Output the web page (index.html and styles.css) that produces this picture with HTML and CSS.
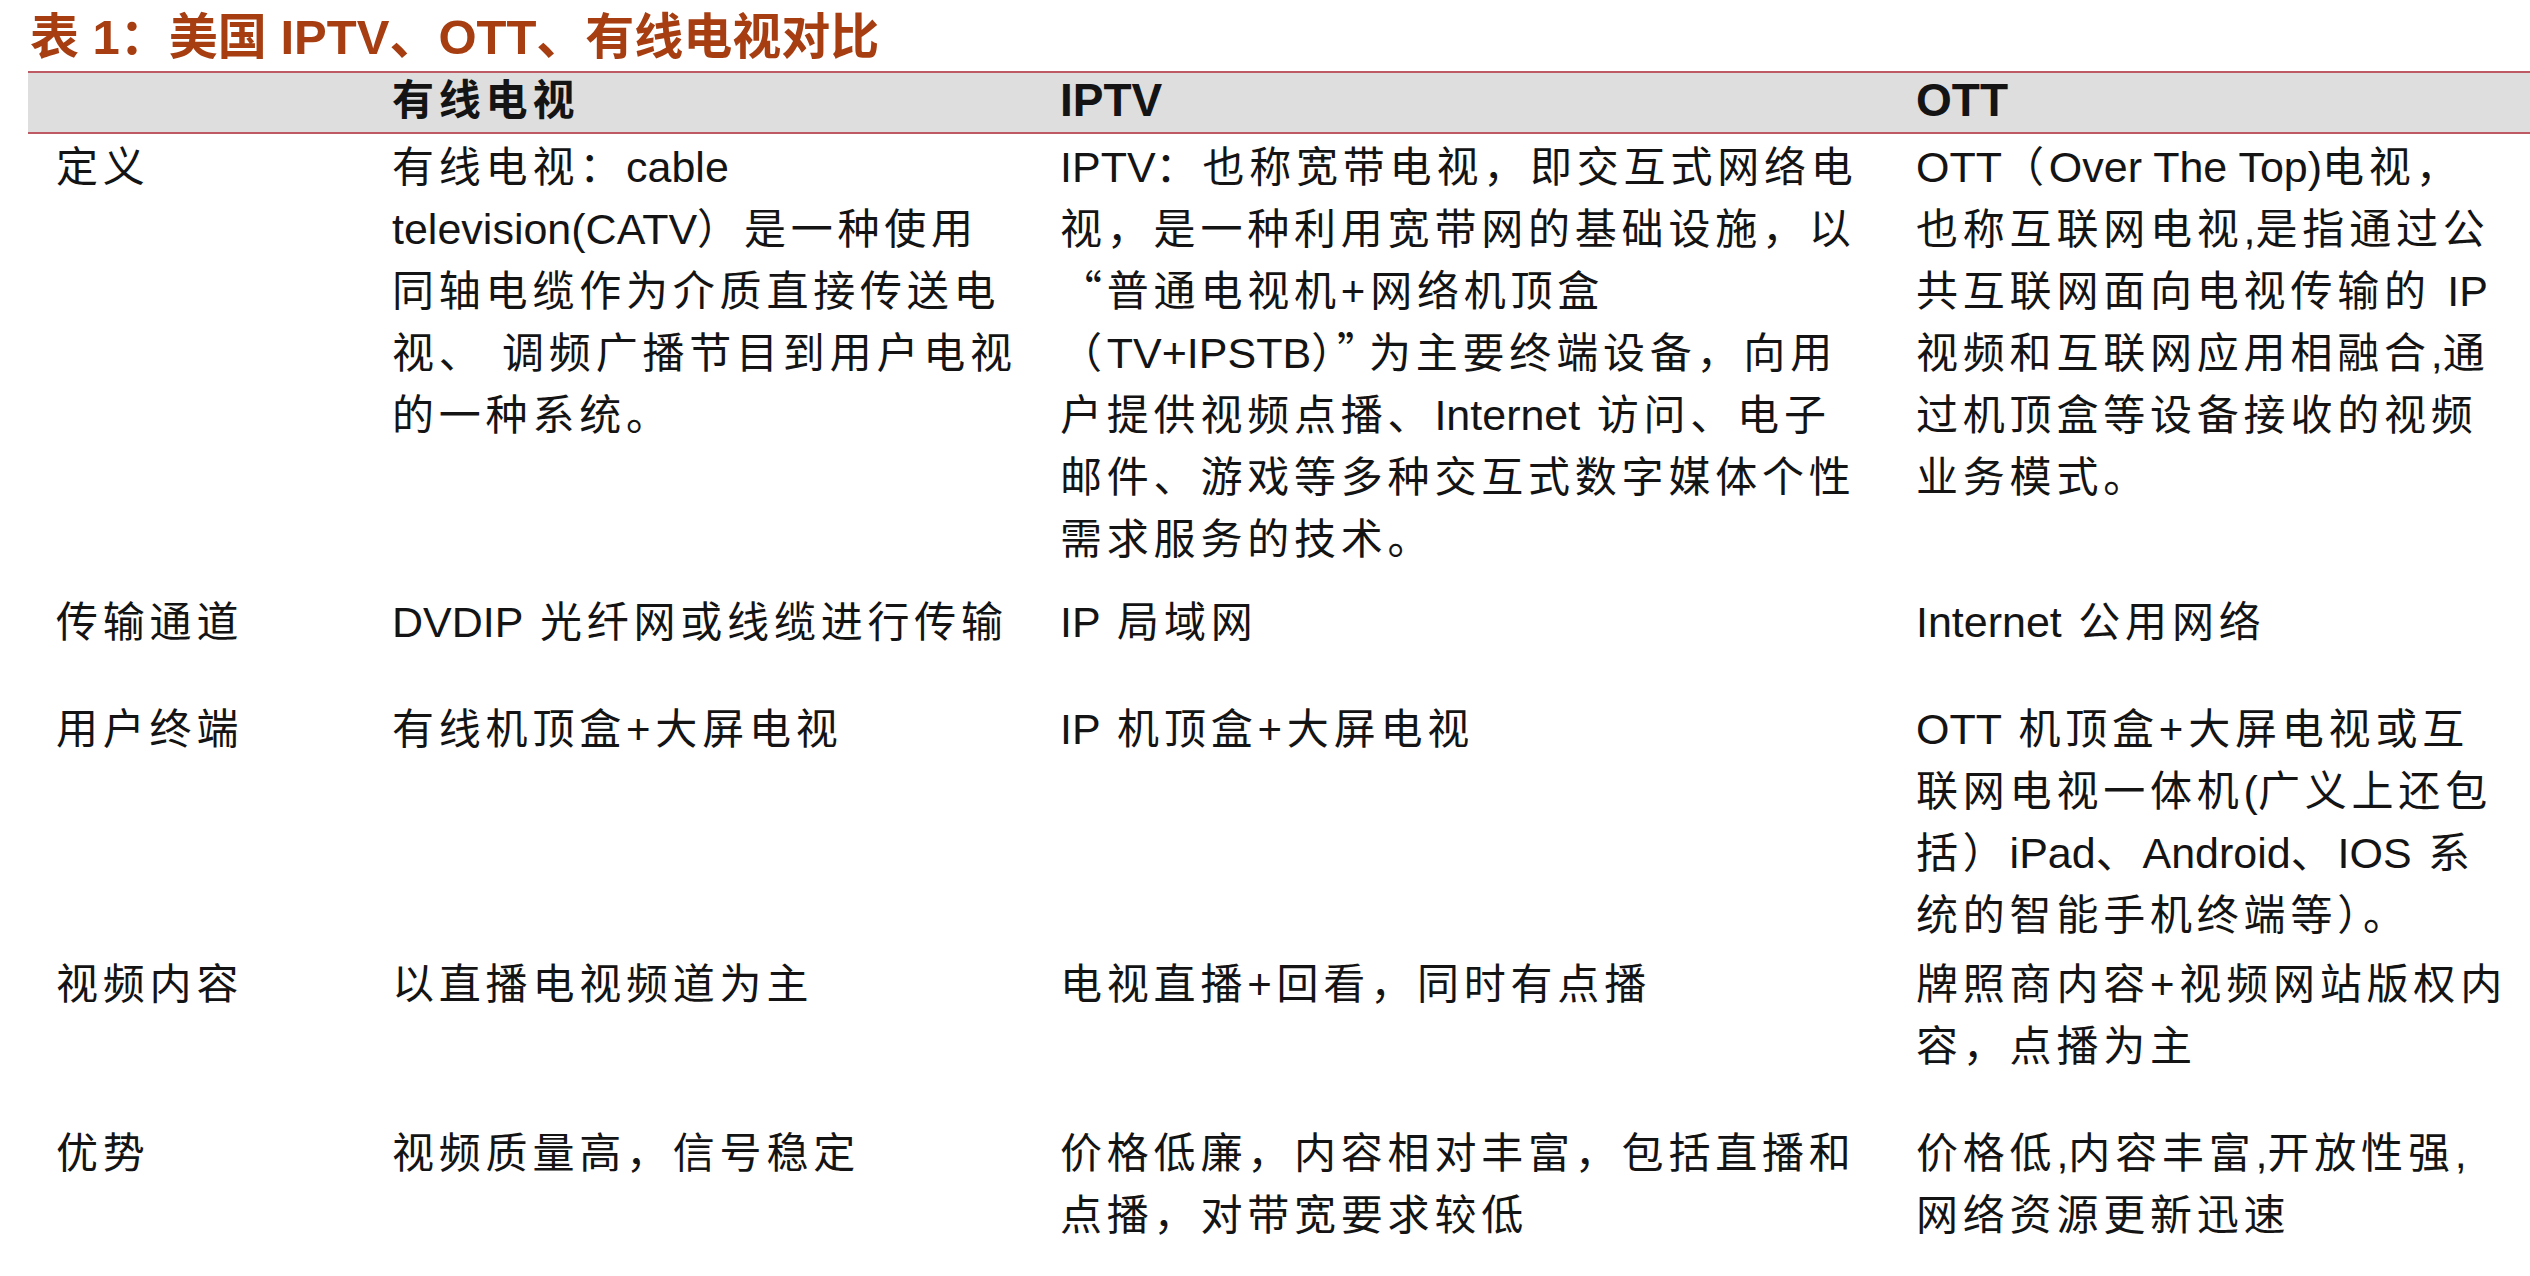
FILE: index.html
```
<!DOCTYPE html>
<html lang="zh-CN">
<head>
<meta charset="utf-8">
<title>表 1：美国 IPTV、OTT、有线电视对比</title>
<link rel="stylesheet" href="styles.css">
</head>
<body>
<h1 class="caption">表 1：美国 IPTV、OTT、有线电视对比</h1>
<div class="table">
  <div class="row head">
    <div class="cell"></div>
    <div class="cell cjk-head">有线电视</div>
    <div class="cell en-head">IPTV</div>
    <div class="cell en-head">OTT</div>
  </div>
  <div class="row r1">
    <div class="cell">定义</div>
    <div class="cell">有线电视：<span class="en">cable</span><br><span class="en">television(CATV</span>）是一种使用<br>同轴电缆作为介质直接传送电<br>视、 调频广播节目到用户电视<br>的一种系统。</div>
    <div class="cell"><span class="en">IPTV</span>：也称宽带电视，即交互式网络电<br>视，是一种利用宽带网的基础设施，以<br><span class="q">“</span>普通电视机+网络机顶盒<br>（<span class="en">TV+IPSTB</span>）<span class="q close">”</span>为主要终端设备，向用<br>户提供视频点播、<span class="en">Internet</span> 访问、电子<br>邮件、游戏等多种交互式数字媒体个性<br>需求服务的技术。</div>
    <div class="cell"><span class="en">OTT</span>（<span class="en">Over The Top)</span>电视，<br>也称互联网电视<span class="en">,</span>是指通过公<br>共互联网面向电视传输的 <span class="en">IP</span><br>视频和互联网应用相融合<span class="en">,</span>通<br>过机顶盒等设备接收的视频<br>业务模式。</div>
  </div>
  <div class="row r2">
    <div class="cell">传输通道</div>
    <div class="cell"><span class="en">DVDIP</span> 光纤网或线缆进行传输</div>
    <div class="cell"><span class="en">IP</span> 局域网</div>
    <div class="cell"><span class="en">Internet</span> 公用网络</div>
  </div>
  <div class="row r3">
    <div class="cell">用户终端</div>
    <div class="cell">有线机顶盒+大屏电视</div>
    <div class="cell"><span class="en">IP</span> 机顶盒+大屏电视</div>
    <div class="cell"><span class="en">OTT</span> 机顶盒+大屏电视或互<br>联网电视一体机<span class="en">(</span>广义上还包<br>括）<span class="en">iPad</span>、<span class="en">Android</span>、<span class="en">IOS</span> 系<br>统的智能手机终端等）。</div>
  </div>
  <div class="row r4">
    <div class="cell">视频内容</div>
    <div class="cell">以直播电视频道为主</div>
    <div class="cell">电视直播+回看，同时有点播</div>
    <div class="cell">牌照商内容+视频网站版权内<br>容，点播为主</div>
  </div>
  <div class="row r5">
    <div class="cell">优势</div>
    <div class="cell">视频质量高，信号稳定</div>
    <div class="cell">价格低廉，内容相对丰富，包括直播和<br>点播，对带宽要求较低</div>
    <div class="cell">价格低<span class="en">,</span>内容丰富<span class="en">,</span>开放性强<span class="en">,</span><br>网络资源更新迅速</div>
  </div>
</div>
</body>
</html>
```
FILE: styles.css
```
html, body {
  margin: 0;
  padding: 0;
  background: #ffffff;
}
body {
  width: 2530px;
  height: 1276px;
  overflow: hidden;
  font-family: "Liberation Sans", "Noto Sans CJK SC", sans-serif;
  color: #141414;
}
.caption {
  margin: 0;
  height: 71px;
  box-sizing: border-box;
  padding: 4px 0 0 30px;
  font-size: 49px;
  line-height: 66px;
  font-weight: 700;
  color: #a63e12;
  white-space: nowrap;
}
.table {
  margin-left: 28px;
}
.row {
  display: grid;
  grid-template-columns: 336px 668px 856px 1fr;
  box-sizing: border-box;
}
.cell {
  padding-left: 28px;
  font-size: 42px;
  letter-spacing: 4.8px;
  line-height: 62px;
  white-space: nowrap;
}
.en {
  font-size: 43px;
  letter-spacing: 0;
  line-height: 0;
}
.q {
  font-family: "Noto Sans CJK SC", sans-serif;
  line-height: 0;
}
.q.close {
  letter-spacing: -10px;
}
.head {
  height: 63px;
  background: #dedede;
  border-top: 2px solid #bd5a64;
  border-bottom: 2px solid #bd5a64;
  padding-bottom: 4px;
}
.head .cell {
  line-height: 55px;
}
.cjk-head {
  font-weight: 700;
  font-size: 42px;
}
.en-head {
  font-weight: 700;
  font-size: 46px;
  letter-spacing: 0;
}
.r1 {
  height: 458px;
  padding-top: 3px;
}
.r2 {
  height: 107px;
}
.r3 {
  height: 255px;
}
.r4 {
  height: 169px;
}
.r5 {
  height: 153px;
}
```
